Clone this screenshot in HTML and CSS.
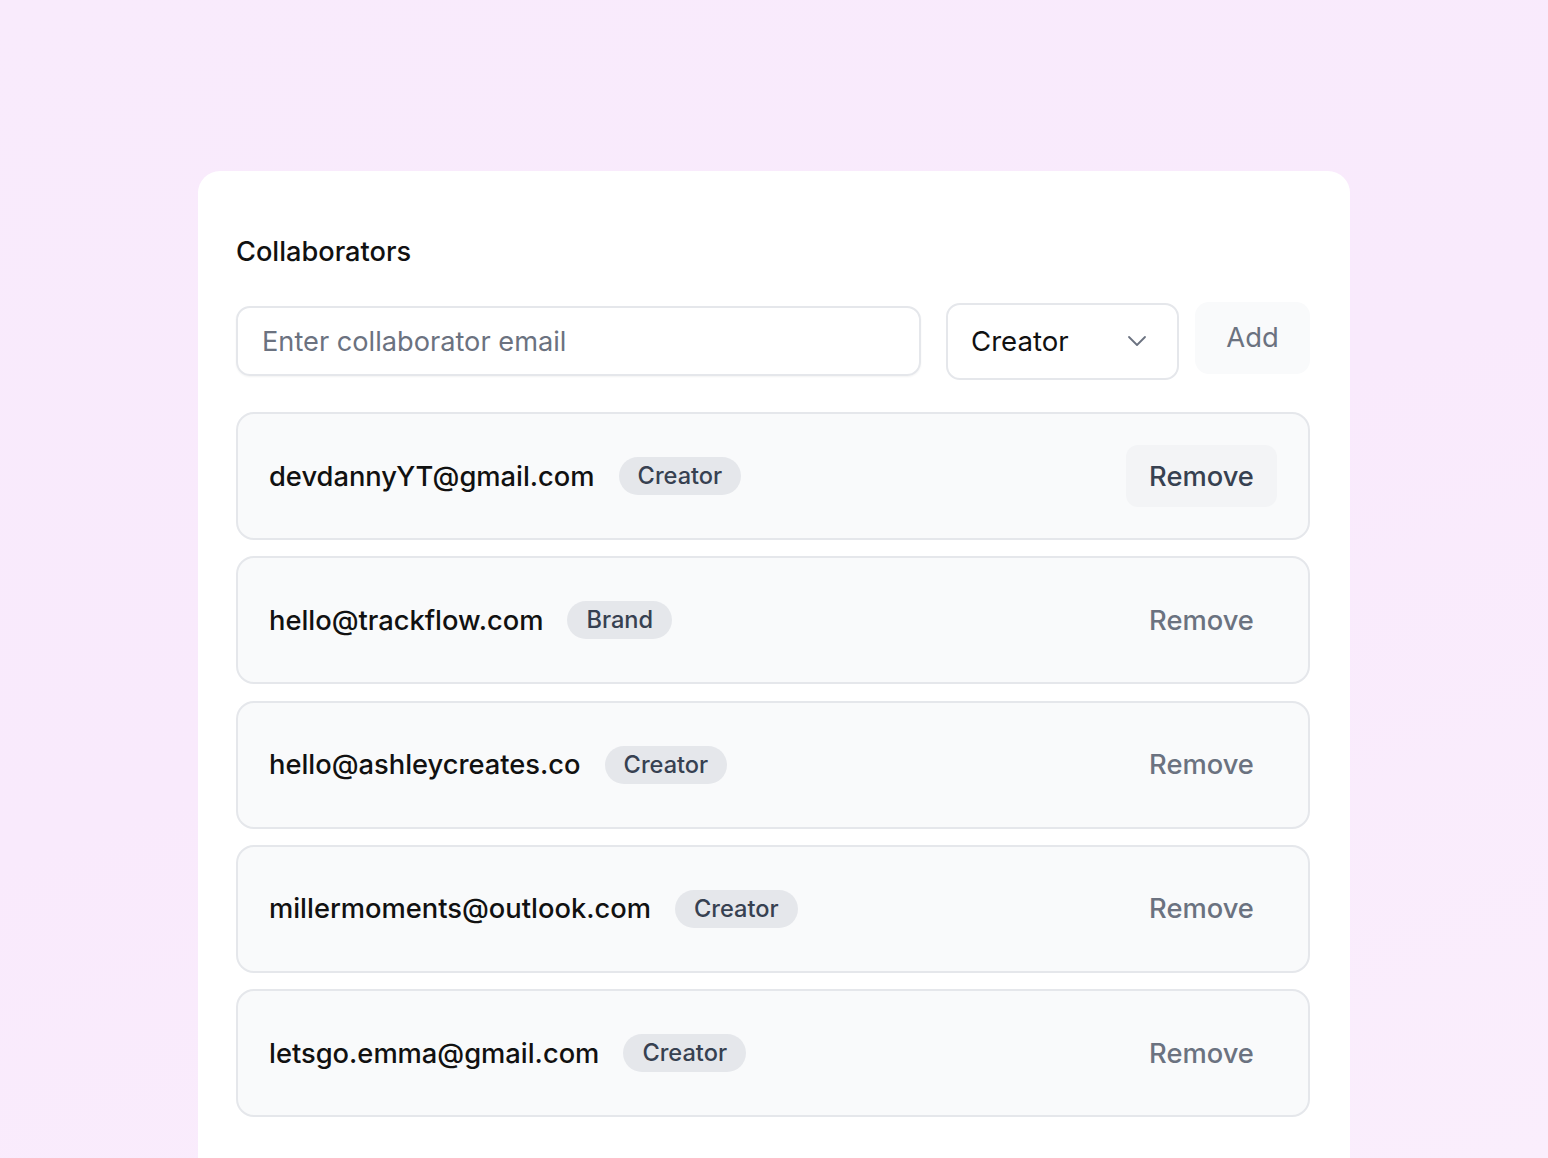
FILE: index.html
```html
<!DOCTYPE html>
<html lang="en">
<head>
<meta charset="utf-8">
<title>Collaborators</title>
<link rel="stylesheet" href="styles.css">
</head>
<body>
<main class="card">
  <h2 class="title">Collaborators</h2>
  <div class="controls">
    <div class="email-input"><span class="placeholder">Enter collaborator email</span></div>
    <div class="select">
      <span class="select-value">Creator</span>
      <svg class="chevron" width="20" height="12" viewBox="0 0 20 12" fill="none"><path d="M2 2 L10 10 L18 2" stroke="#6b7280" stroke-width="1.8" stroke-linecap="round" stroke-linejoin="round"/></svg>
    </div>
    <button class="add-btn">Add</button>
  </div>
  <ul class="list">
    <li class="row">
      <div class="who"><span class="email">devdannyYT@gmail.com</span><span class="badge">Creator</span></div>
      <button class="remove active">Remove</button>
    </li>
    <li class="row">
      <div class="who"><span class="email">hello@trackflow.com</span><span class="badge">Brand</span></div>
      <button class="remove">Remove</button>
    </li>
    <li class="row">
      <div class="who"><span class="email">hello@ashleycreates.co</span><span class="badge">Creator</span></div>
      <button class="remove">Remove</button>
    </li>
    <li class="row">
      <div class="who"><span class="email">millermoments@outlook.com</span><span class="badge">Creator</span></div>
      <button class="remove">Remove</button>
    </li>
    <li class="row">
      <div class="who"><span class="email">letsgo.emma@gmail.com</span><span class="badge">Creator</span></div>
      <button class="remove">Remove</button>
    </li>
  </ul>
</main>
</body>
</html>
```

FILE: styles.css
```css
* { box-sizing: border-box; }
html, body { margin: 0; padding: 0; height: 100%; overflow: hidden; }
body {
  background: linear-gradient(160deg, #f9ebfc 0%, #f9eafc 50%, #faeefc 100%);
  font-family: Inter, "Noto Sans", "Liberation Sans", sans-serif;
  color: #111827;
}
.card {
  margin: 171px 0 0 198px;
  width: 1152px;
  height: 987px;
  background: #ffffff;
  border-radius: 22px 22px 0 0;
  padding: 65px 40px 0 38px;
}
.title {
  margin: 0;
  font-size: 27.2px;
  line-height: 32px;
  font-weight: 500;
  color: #111111;
}
.controls {
  margin-top: 34px;
  display: flex;
  align-items: center;
  height: 78px;
}
.email-input {
  width: 685px;
  height: 70px;
  border: 2px solid #e5e7eb;
  border-radius: 14px;
  display: flex;
  align-items: center;
  padding-left: 24px;
  box-shadow: 0 1px 2px rgba(0,0,0,0.05);
}
.placeholder { font-size: 27.2px; color: #6b7280; }
.select {
  margin-left: 25px;
  width: 233px;
  height: 77px;
  border: 2px solid #e5e7eb;
  border-radius: 14px;
  display: flex;
  align-items: center;
  justify-content: space-between;
  padding: 0 30px 0 23px;
}
.select-value { font-size: 27.6px; color: #111111; }
.chevron { display: block; }
.add-btn {
  align-self: flex-start;
  margin-left: 16px;
  width: 115px;
  height: 72px;
  border: none;
  background: #f9fafb;
  border-radius: 14px;
  font-family: inherit;
  font-size: 27.4px;
  color: #6b7280;
  padding: 0 0 3px;
}
.list {
  list-style: none;
  margin: 32px 0 0;
  padding: 0;
  display: flex;
  flex-direction: column;
  gap: 16.25px;
}
.row {
  height: 128px;
  border: 2px solid #e5e7eb;
  border-radius: 18px;
  background: #f9fafb;
  display: flex;
  align-items: center;
  justify-content: space-between;
  padding: 0 31px 0 31px;
}
.who { display: flex; align-items: center; gap: 24px; }
.email { font-size: 27.3px; font-weight: 500; color: #111111; }
.badge {
  background: #e5e7eb;
  color: #374151;
  font-size: 23.6px;
  font-weight: 500;
  height: 38px;
  line-height: 38px;
  padding: 0 19px;
  border-radius: 19px;
}
.remove {
  width: 151px;
  height: 62px;
  border: none;
  border-radius: 12px;
  background: transparent;
  font-family: inherit;
  font-size: 27.3px;
  font-weight: 500;
  color: #6b7280;
  padding: 0;
}
.remove.active { background: #f3f4f6; color: #374151; }
```
